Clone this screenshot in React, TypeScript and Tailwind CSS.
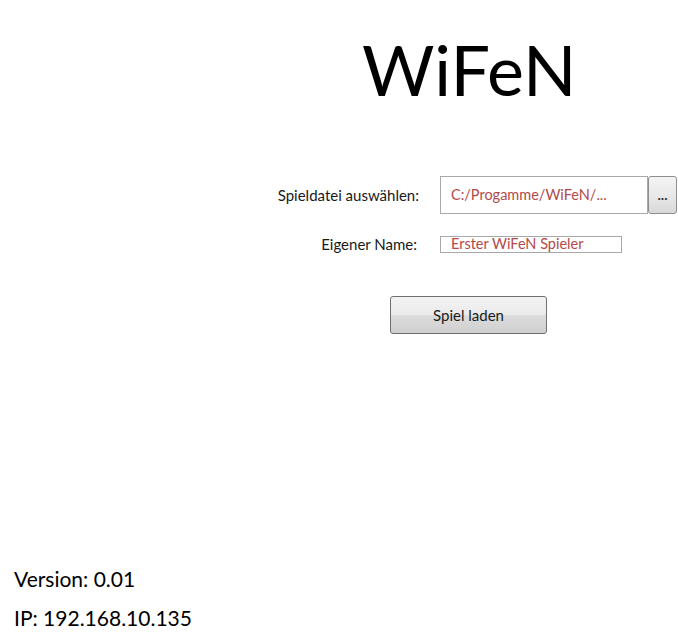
export default function App() {
  return (
    <main
      className="relative w-[678px] h-[644px] bg-white text-black overflow-hidden"
      style={{ fontFamily: "Lato, 'Open Sans', sans-serif" }}
    >
      {/* Title */}
      <div className="pt-[28px] pl-[362px] h-[120px]">
        <h1 className="text-[70px] leading-[82px]">WiFeN</h1>
      </div>

      {/* Form */}
      <div className="mt-[56px] flex flex-col">
        <div className="flex items-center h-[38px]">
          <label className="w-[419px] text-right text-[15px] text-[#1a1a1a]">
            Spieldatei auswählen:
          </label>
          <div className="ml-[21px] flex h-[38px]">
            <div className="w-[208px] h-full border border-[#a9a9a9] bg-white flex items-center pl-[10px] text-[14.5px] text-[#b34a4a]">
              C:/Progamme/WiFeN/...
            </div>
            <button className="w-[29px] h-full border border-[#8e8e8e] rounded-[3px] bg-gradient-to-b from-[#f4f4f4] via-[#e9e9e9] to-[#d8d8d8] text-[14px] font-bold leading-none text-[#333]">
              ...
            </button>
          </div>
        </div>

        <div className="flex items-center mt-[22px] h-[17px]">
          <label className="w-[417px] text-right text-[15px] text-[#1a1a1a]">
            Eigener Name:
          </label>
          <div className="ml-[23px] w-[182px] h-[17px] border border-[#a9a9a9] bg-white flex items-center pl-[10px] text-[14.5px] leading-none text-[#b34a4a]">
            Erster WiFeN Spieler
          </div>
        </div>

        <div className="mt-[43px] pl-[390px]">
          <button className="w-[157px] h-[38px] border border-[#707070] rounded-[3px] bg-[linear-gradient(to_bottom,#f2f2f2_0%,#ebebeb_50%,#dddddd_50%,#cfcfcf_100%)] text-[15px] text-[#1a1a1a]">
            Spiel laden
          </button>
        </div>
      </div>

      {/* Footer info */}
      <div className="absolute left-[14px] top-[564px] flex flex-col gap-[10px] text-[21px] leading-[29px]">
        <span>Version: 0.01</span>
        <span>IP: 192.168.10.135</span>
      </div>
    </main>
  );
}
